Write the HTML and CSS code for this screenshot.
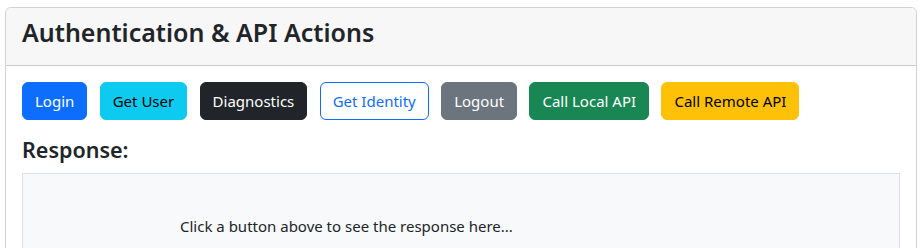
FILE: index.html
```html
<!DOCTYPE html>
<html lang="en">
<head>
<meta charset="utf-8">
<title>Authentication &amp; API Actions</title>
<link rel="stylesheet" href="styles.css">
</head>
<body>
<div class="card">
  <div class="card-header">
    <h3 class="card-title">Authentication &amp; API Actions</h3>
  </div>
  <div class="card-body">
    <div class="actions">
      <button class="btn btn-primary">Login</button>
      <button class="btn btn-info">Get User</button>
      <button class="btn btn-dark">Diagnostics</button>
      <button class="btn btn-outline-primary">Get Identity</button>
      <button class="btn btn-secondary">Logout</button>
      <button class="btn btn-success">Call Local API</button>
      <button class="btn btn-warning">Call Remote API</button>
    </div>
    <h4 class="response-title">Response:</h4>
    <div class="response-box"><div class="blank-line"></div><div class="response-text">Click a button above to see the response here...</div></div>
  </div>
</div>
</body>
</html>
```

FILE: styles.css
```css
* { box-sizing: border-box; }
html, body { margin: 0; padding: 0; background: #fff; }
body {
  font-family: "Noto Sans", "Open Sans", sans-serif;
  font-size: 15px;
  line-height: 24px;
  color: #212529;
  padding: 7px 5px 0 5px;
}
.card {
  border: 1px solid rgba(0,0,0,0.175);
  border-radius: 6px;
  background: #fff;
  overflow: hidden;
}
.card-header {
  background: #f7f7f7;
  border-bottom: 1px solid rgba(0,0,0,0.175);
  padding: 8px 16px;
}
.card-title {
  margin: 0 0 8px 0;
  font-size: 25px;
  line-height: 33px;
  font-weight: 600;
}
.card-body { padding: 16px; }
.actions {
  display: flex;
  gap: 12.4px;
  margin-bottom: 16px;
}
.btn {
  font-family: inherit;
  font-size: 15px;
  line-height: 24px;
  padding: 6px 12px;
  border: 1px solid transparent;
  border-radius: 6px;
  cursor: pointer;
}
.btn-primary { background: #0d6efd; border-color: #0d6efd; color: #fff; }
.btn-info { background: #0dcaf0; border-color: #0dcaf0; color: #000; }
.btn-dark { background: #212529; border-color: #212529; color: #fff; }
.btn-outline-primary { background: #fff; border-color: #0d6efd; color: #0d6efd; }
.btn-secondary { background: #6c757d; border-color: #6c757d; color: #fff; }
.btn-success { background: #198754; border-color: #198754; color: #fff; }
.btn-warning { background: #ffc107; border-color: #ffc107; color: #000; }
.response-title {
  margin: 0 0 8px 0;
  font-size: 21.5px;
  line-height: 28.8px;
  font-weight: 600;
}
.response-box {
  background: #f8f9fa;
  border: 1px solid #dee2e6;
  padding: 16px;
  min-height: 120px;
}
.blank-line { height: 24px; }
.response-text { padding-left: 141px; }
```
